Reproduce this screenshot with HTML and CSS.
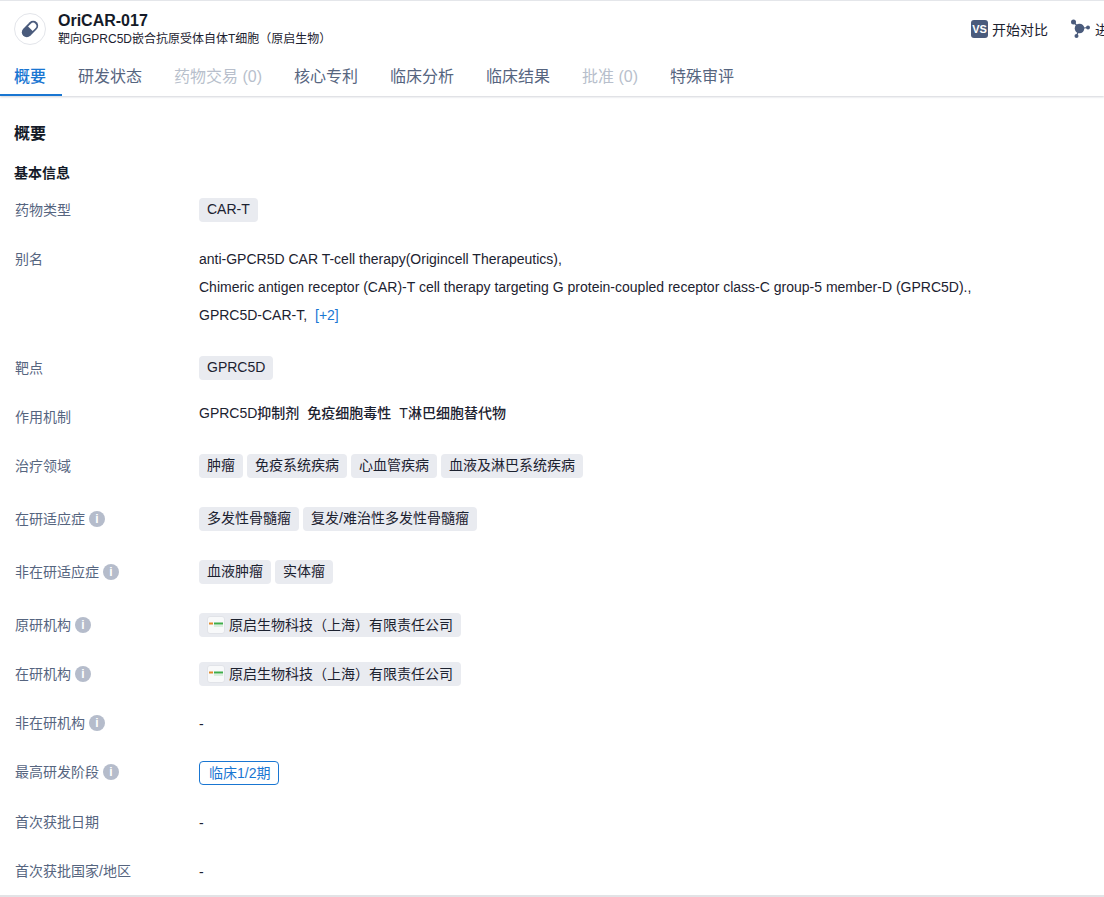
FILE: index.html
```html
<!DOCTYPE html>
<html lang="zh-CN">
<head>
  <meta charset="UTF-8">
  <title>OriCAR-017</title>
  <link rel="stylesheet" href="styles.css">
</head>
<body>

<header class="top">
  <div class="top-row">
    <div class="drug-icon">
      <svg width="20" height="20" viewBox="0 0 20 20">
        <g transform="rotate(-45 10 10)">
          <rect x="0.5" y="5" width="19" height="10" rx="5" fill="#4a5b7c"/>
          <path d="M10.500 6.800h3.900a3.200 3.200 0 0 1 0 6.400h-3.900z" fill="#fff"/>
        </g>
      </svg>
    </div>
    <div class="drug-title">
      <div class="drug-name">OriCAR-017</div>
      <div class="drug-sub">靶向GPRC5D嵌合抗原受体自体T细胞（原启生物）</div>
    </div>
    <div class="actions">
      <a class="action"><span class="vs-badge">VS</span>开始对比</a>
      <a class="action">
        <svg width="20" height="20" viewBox="0 0 20 20">
          <g stroke="#4a5b7c" stroke-width="1.200">
            <line x1="2.500" y1="3" x2="8.500" y2="9.500"/>
            <line x1="8.500" y1="9.500" x2="17" y2="8.500"/>
            <line x1="8.500" y1="9.500" x2="5.500" y2="17"/>
          </g>
          <g fill="#4a5b7c">
            <circle cx="2.500" cy="3" r="2.500"/>
            <circle cx="8.500" cy="9.500" r="4.800"/>
            <circle cx="17" cy="8.500" r="2"/>
            <circle cx="5.500" cy="17" r="2"/>
          </g>
        </svg>
        进化树
      </a>
    </div>
  </div>
  <nav class="tabs">
    <a class="tab active">概要</a>
    <a class="tab">研发状态</a>
    <a class="tab off">药物交易 (0)</a>
    <a class="tab">核心专利</a>
    <a class="tab">临床分析</a>
    <a class="tab">临床结果</a>
    <a class="tab off">批准 (0)</a>
    <a class="tab">特殊审评</a>
  </nav>
</header>

<main class="content">
  <h2 class="page-title">概要</h2>
  <h3 class="section-title">基本信息</h3>

  <div class="row">
    <div class="label">药物类型</div>
    <div class="value"><span class="tag">CAR-T</span></div>
  </div>

  <div class="row row-alias">
    <div class="label">别名</div>
    <div class="value alias">
      <div>anti-GPCR5D CAR T-cell therapy(Origincell Therapeutics),</div>
      <div>Chimeric antigen receptor (CAR)-T cell therapy targeting G protein-coupled receptor class-C group-5 member-D (GPRC5D).,</div>
      <div>GPRC5D-CAR-T, <a class="more">[+2]</a></div>
    </div>
  </div>

  <div class="row">
    <div class="label">靶点</div>
    <div class="value"><span class="tag">GPRC5D</span></div>
  </div>

  <div class="row">
    <div class="label">作用机制</div>
    <div class="value mech"><span>GPRC5D抑制剂</span><span>免疫细胞毒性</span><span>T淋巴细胞替代物</span></div>
  </div>

  <div class="row row-tags">
    <div class="label">治疗领域</div>
    <div class="value"><span class="tag">肿瘤</span><span class="tag">免疫系统疾病</span><span class="tag">心血管疾病</span><span class="tag">血液及淋巴系统疾病</span></div>
  </div>

  <div class="row row-tags">
    <div class="label">在研适应症<i class="info">i</i></div>
    <div class="value"><span class="tag">多发性骨髓瘤</span><span class="tag">复发/难治性多发性骨髓瘤</span></div>
  </div>

  <div class="row row-tags">
    <div class="label">非在研适应症<i class="info">i</i></div>
    <div class="value"><span class="tag">血液肿瘤</span><span class="tag">实体瘤</span></div>
  </div>

  <div class="row">
    <div class="label">原研机构<i class="info">i</i></div>
    <div class="value">
      <span class="tag org">
        <span class="org-logo">
          <svg width="16" height="6" viewBox="0 0 16 6"><rect x="1" y="0.500" width="4" height="2" fill="#e08a2c"/><rect x="6" y="0.500" width="9" height="2" fill="#3fae4a"/><rect x="6" y="3.500" width="9" height="1" fill="#bfe3c3"/></svg>
        </span>
        原启生物科技（上海）有限责任公司
      </span>
    </div>
  </div>

  <div class="row">
    <div class="label">在研机构<i class="info">i</i></div>
    <div class="value">
      <span class="tag org">
        <span class="org-logo">
          <svg width="16" height="6" viewBox="0 0 16 6"><rect x="1" y="0.500" width="4" height="2" fill="#e08a2c"/><rect x="6" y="0.500" width="9" height="2" fill="#3fae4a"/><rect x="6" y="3.500" width="9" height="1" fill="#bfe3c3"/></svg>
        </span>
        原启生物科技（上海）有限责任公司
      </span>
    </div>
  </div>

  <div class="row">
    <div class="label">非在研机构<i class="info">i</i></div>
    <div class="value plain">-</div>
  </div>

  <div class="row">
    <div class="label">最高研发阶段<i class="info">i</i></div>
    <div class="value"><span class="phase">临床1/2期</span></div>
  </div>

  <div class="row">
    <div class="label">首次获批日期</div>
    <div class="value plain">-</div>
  </div>

  <div class="row">
    <div class="label">首次获批国家/地区</div>
    <div class="value plain">-</div>
  </div>
</main>

</body>
</html>
```

FILE: styles.css
```css
html, body {
  margin: 0;
  padding: 0;
  overflow: hidden;
  height: 897px;
  background-color: #ffffff;
  font-family: "Liberation Sans", "Noto Sans CJK SC", sans-serif;
  color: #1c2230;
}

.top {
  height: 96px;
  box-sizing: border-box;
  border-top: 1px solid #e4e6ea;
  box-shadow: 0 1px 2px rgba(30, 40, 70, 0.2);
  overflow: hidden;
}

.top-row {
  display: flex;
  align-items: center;
  height: 56px;
  padding-left: 14px;
}

.drug-icon {
  width: 30px;
  height: 30px;
  border: 1px solid #e3e5ea;
  border-radius: 50%;
  display: flex;
  align-items: center;
  justify-content: center;
  flex-shrink: 0;
}

.drug-title {
  margin-left: 12px;
  flex: 1;
}

.drug-name {
  font-size: 16px;
  line-height: 20px;
  font-weight: 700;
  color: #141a28;
}

.drug-sub {
  font-size: 12px;
  line-height: 16px;
  color: #1c2230;
}

.actions {
  display: flex;
  align-items: center;
  gap: 23px;
  flex-shrink: 0;
  margin-right: -33px;
}

.action {
  display: flex;
  align-items: center;
  gap: 4px;
  font-size: 14px;
  color: #1c2230;
}

.vs-badge {
  width: 17px;
  height: 18px;
  border-radius: 3px;
  background-color: #4a5b7c;
  color: #ffffff;
  font-size: 11px;
  font-weight: 700;
  line-height: 18px;
  text-align: center;
}

.tabs {
  display: flex;
  height: 39px;
}

.tab {
  font-size: 16px;
  line-height: 40px;
  padding: 0 16px;
  color: #56657f;
}

.tab:first-child {
  padding-left: 14px;
}

.tab.active {
  color: #1976d2;
  font-weight: 500;
  box-shadow: inset 0 -2px 0 #1976d2;
}

.tab.off {
  color: #b8bfcc;
}

.content {
  height: 801px;
  padding: 0 14px;
  box-sizing: border-box;
  border-bottom: 2px solid #e2e3e6;
  overflow: hidden;
}

.page-title {
  margin: 27px 0 0;
  font-size: 16px;
  line-height: 22px;
  font-weight: 600;
  color: #141a28;
}

.section-title {
  margin: 18px 0 0;
  font-size: 14px;
  line-height: 20px;
  font-weight: 600;
  color: #141a28;
}

.row {
  display: flex;
  margin-bottom: 25px;
}

.section-title + .row {
  margin-top: 15px;
}

.row-alias {
  margin-top: -2px;
  margin-bottom: 27px;
}

.row-tags .tag {
  margin-bottom: 4px;
}

.label {
  width: 185px;
  flex-shrink: 0;
  padding-left: 1px;
  padding-bottom: 2px;
  box-sizing: border-box;
  display: flex;
  align-items: center;
  height: 24px;
  font-size: 14px;
  color: #56657f;
}

.row-alias .label {
  margin-top: 2px;
}

.value {
  display: flex;
  flex-wrap: wrap;
  gap: 0 4px;
  font-size: 14px;
  color: #1c2230;
}

.alias {
  display: block;
  line-height: 28px;
}

.more {
  color: #1976d2;
  margin-left: 4px;
}

.mech {
  gap: 8px;
  font-weight: 500;
  line-height: 16px;
}

.plain {
  height: 24px;
  line-height: 26px;
}

.tag {
  display: inline-flex;
  align-items: center;
  box-sizing: border-box;
  height: 24px;
  padding: 0 8px 2px;
  background-color: #e9ebf0;
  border-radius: 4px;
  line-height: 22px;
}

.org {
  padding: 0 8px;
  gap: 4px;
}

.org-logo {
  width: 16px;
  height: 16px;
  border: 1px solid #e1e3e8;
  border-radius: 3px;
  background-color: #f8f9fa;
  display: flex;
  align-items: center;
  justify-content: center;
  overflow: hidden;
}

.phase {
  display: inline-block;
  height: 22px;
  line-height: 22px;
  margin-top: 1px;
  padding: 0 8px 0 9px;
  border: 1px solid #1976d2;
  border-radius: 4px;
  color: #1976d2;
}

.info {
  width: 16px;
  height: 16px;
  margin: 2px 0 0 4px;
  border-radius: 50%;
  background-color: #b5bccb;
  color: #ffffff;
  font-size: 12px;
  font-weight: 700;
  font-style: normal;
  line-height: 16px;
  text-align: center;
}
```
